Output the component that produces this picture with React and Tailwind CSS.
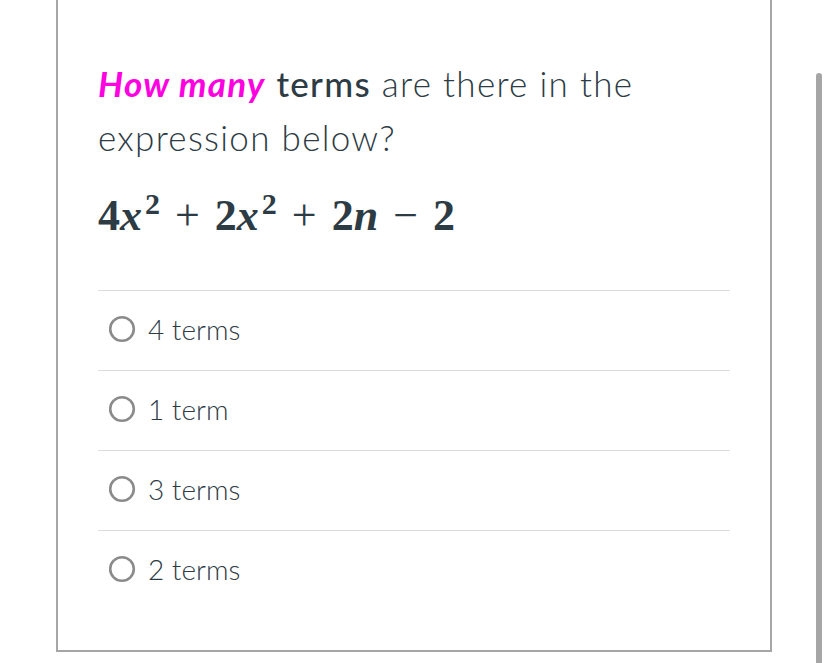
import React from 'react';

const options = ['4 terms', '1 term', '3 terms', '2 terms'];

const Radio = () => (
    <svg width="28" height="28" viewBox="0 0 28 28" className="shrink-0">
        <circle cx="14" cy="14" r="11.8" fill="none" stroke="#8b8b8b" strokeWidth="2.6" />
    </svg>
);

const Sup = ({ children }) => (
    <span className="relative -top-[19px] text-[30px] not-italic ml-[3px]">{children}</span>
);

const Op = ({ children }) => <span className="mx-[15px] font-normal not-italic">{children}</span>;

const App = () => {
    return (
        <div className="relative w-[828px] h-[663px] overflow-hidden bg-white font-['Lato',sans-serif]">
            <div className="ml-[56px] -mt-[40px] w-[716px] h-[692px] border-2 border-[#a6a6a6] bg-white px-[40px] pt-[94px]">
                <p className="text-[35px] leading-[54px] text-[#2d3b45] font-light tracking-[1.3px]">
                    <span className="italic font-bold text-[#ff00e1]">How many</span>{' '}
                    <span className="font-medium">terms</span> are there in the expression below?
                </p>
                <div className="mt-[28px] h-[46px] flex items-end text-[44px] leading-none text-[#2d3b45] font-['Liberation_Serif',serif] font-bold">
                    <span>4</span>
                    <span className="italic">x</span>
                    <Sup>2</Sup>
                    <Op>+</Op>
                    <span>2</span>
                    <span className="italic">x</span>
                    <Sup>2</Sup>
                    <Op>+</Op>
                    <span>2</span>
                    <span className="italic">n</span>
                    <Op>−</Op>
                    <span>2</span>
                </div>
                <div className="mt-[52px]">
                    {options.map((opt) => (
                        <div key={opt} className="border-t border-[#dcdcdc] h-[80px] flex items-center gap-[12px] pl-[10px] pb-[3px]">
                            <Radio />
                            <span className="text-[28px] font-light text-[#2d3b45] leading-none">{opt}</span>
                        </div>
                    ))}
                </div>
            </div>
            <div className="absolute left-[816px] top-[73px] w-[6px] h-[600px] rounded-t-[3px] bg-[#a6a6a6]" />
        </div>
    );
};

export default App;
